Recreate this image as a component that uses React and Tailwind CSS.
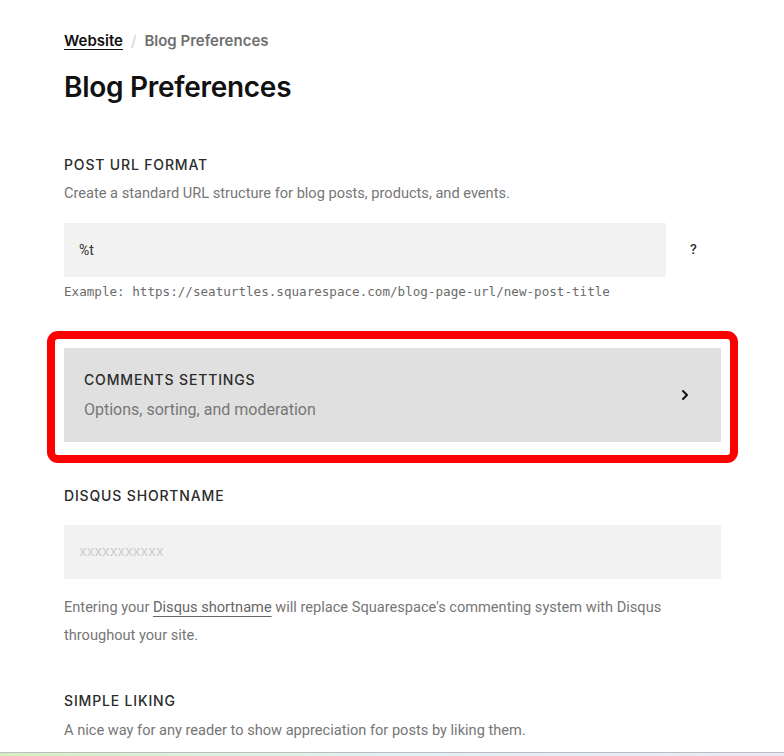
import { ChevronRight } from "lucide-react";

const sans = "font-['Inter',sans-serif]";
const body = "font-['Roboto',sans-serif]";

const Label = ({ children }) => (
    <h3 className={`${sans} text-[14px] font-medium uppercase tracking-[0.06em] text-[#2b2b2b] leading-5`}>{children}</h3>
);

const App = () => {
    return (
        <div className="min-h-[756px] bg-white flex flex-col">
            <div className="flex-1 pl-16 pr-[63px] pt-[31px]">
                {/* breadcrumb */}
                <nav className={`${sans} flex items-center gap-2 text-[15px] font-semibold leading-5`}>
                    <span className="text-[#111] underline underline-offset-[3px]">Website</span>
                    <span className="text-[#d0d0d0] font-normal">/</span>
                    <span className="text-[#6f6f6f]">Blog Preferences</span>
                </nav>
                <h1 className={`${sans} mt-[20px] text-[28px] font-semibold text-[#111] leading-8 tracking-[-0.01em]`}>
                    Blog Preferences
                </h1>

                {/* post url */}
                <section className="mt-[52px]">
                    <Label>Post URL Format</Label>
                    <p className={`${body} mt-[8px] text-[14.6px] text-[#767676] leading-5`}>
                        Create a standard URL structure for blog posts, products, and events.
                    </p>
                    <div className="mt-[20px] flex items-center">
                        <div className={`${body} flex-1 h-[54px] bg-[#f2f2f2] flex items-center px-[15px] text-[14px] text-[#333]`}>
                            %t
                        </div>
                        <div className={`${sans} w-[55px] text-center text-[13px] font-medium text-[#222]`}>?</div>
                    </div>
                    <p className="mt-[7px] font-['DejaVu_Sans_Mono',monospace] text-[12.6px] text-[#6b6b6b] leading-4">
                        Example: https://seaturtles.squarespace.com/blog-page-url/new-post-title
                    </p>
                </section>

                {/* comments settings, highlighted */}
                <div className="mt-[31px] -mx-[17px] border-[8px] border-[#f00] rounded-[11px] px-[9px] pt-[9px] pb-[13px]">
                    <div className="bg-[#e0e0e0] h-[94px] flex items-center justify-between pl-5 pr-[28px]">
                        <div>
                            <Label>Comments Settings</Label>
                            <p className={`${body} mt-[10px] text-[16px] text-[#777] leading-5`}>
                                Options, sorting, and moderation
                            </p>
                        </div>
                        <ChevronRight size={16} strokeWidth={3} className="text-[#111]" />
                    </div>
                </div>

                {/* disqus */}
                <section className="mt-[23px]">
                    <Label>Disqus Shortname</Label>
                    <div className={`${body} mt-[19px] h-[54px] bg-[#f2f2f2] flex items-center px-[15px] text-[15.5px] text-[#cfcfcf]`}>
                        xxxxxxxxxxx
                    </div>
                    <p className={`${body} mt-[14px] text-[14.6px] text-[#767676] leading-7`}>
                        Entering your{" "}
                        <span className="underline underline-offset-[4px] decoration-[#666] text-[#666]">Disqus shortname</span>{" "}
                        will replace Squarespace's commenting system with Disqus throughout your site.
                    </p>
                </section>

                {/* simple liking */}
                <section className="mt-[42px]">
                    <Label>Simple Liking</Label>
                    <p className={`${body} mt-[9px] text-[14.6px] text-[#767676] leading-5`}>
                        A nice way for any reader to show appreciation for posts by liking them.
                    </p>
                </section>
            </div>
            <div className="h-[4px] border-t border-[#bdbdbd] bg-gradient-to-r from-[#d4f0c0] via-[#dff4f6] to-[#ebe8f4]" />
        </div>
    );
};

export default App;
